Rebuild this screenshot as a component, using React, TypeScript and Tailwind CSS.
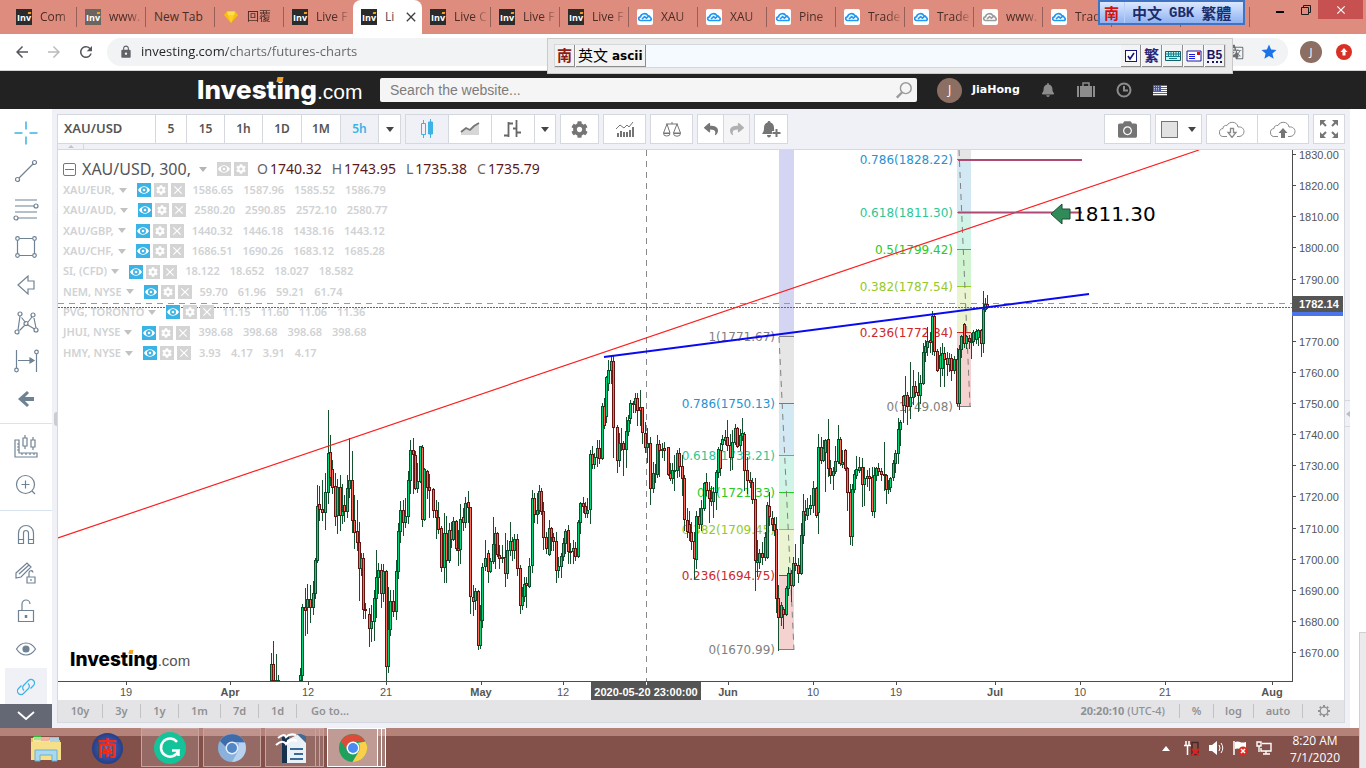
import type { ReactNode } from "react";
import { FaBell, FaCamera, FaCog, FaReply, FaShare } from "react-icons/fa";
import { MdArrowBack, MdArrowForward, MdClose, MdGTranslate, MdLock, MdRefresh, MdStar } from "react-icons/md";

type Candle = [number, number, number, number, number, number];

// x, high, body top, body bottom, low, 1 = up / 0 = down
const candles: Candle[] = [
  [271, 653, 664, 680, 680, 1], [273, 641, 664, 680, 680, 0], [276, 654, 680, 680, 680, 1], [278, 675, 680, 680, 680, 1],
  [300, 668, 675, 680, 680, 1], [302, 604, 607, 675, 680, 1], [305, 588, 607, 610, 635, 0], [307, 584, 599, 607, 633, 1],
  [310, 585, 599, 607, 622, 0], [313, 581, 593, 607, 614, 1], [315, 558, 560, 593, 598, 1], [317, 485, 506, 560, 562, 1],
  [319, 486, 504, 509, 520, 0], [322, 480, 509, 512, 520, 0], [325, 473, 492, 512, 529, 1], [328, 410, 453, 492, 503, 1],
  [330, 435, 452, 477, 485, 0], [332, 460, 469, 487, 493, 0], [335, 473, 486, 516, 525, 0], [337, 479, 487, 515, 533, 1],
  [340, 475, 487, 515, 530, 0], [342, 484, 511, 515, 523, 1], [344, 495, 505, 511, 521, 0], [347, 475, 488, 511, 517, 1],
  [349, 438, 480, 488, 497, 1], [352, 451, 480, 520, 532, 0], [354, 495, 520, 532, 548, 0], [357, 500, 531, 542, 550, 0],
  [359, 522, 542, 568, 600, 0], [361, 553, 558, 568, 575, 1], [363, 553, 558, 609, 618, 0], [365, 603, 609, 610, 618, 0],
  [369, 608, 614, 628, 646, 0], [371, 605, 621, 628, 641, 1], [374, 590, 598, 621, 640, 1], [376, 550, 577, 598, 617, 1],
  [378, 563, 570, 577, 593, 1], [381, 564, 570, 593, 607, 0], [383, 564, 571, 593, 601, 1], [386, 570, 571, 666, 680, 0],
  [388, 587, 629, 666, 672, 1], [390, 590, 601, 629, 635, 1], [393, 590, 601, 611, 616, 0], [396, 560, 571, 611, 619, 1],
  [398, 523, 531, 571, 578, 1], [400, 501, 510, 531, 542, 1], [403, 500, 510, 522, 535, 0], [405, 498, 516, 522, 527, 1],
  [408, 471, 480, 516, 523, 1], [410, 440, 450, 480, 493, 1], [413, 438, 450, 454, 493, 0], [415, 451, 455, 488, 489, 0],
  [417, 463, 481, 488, 492, 1], [420, 446, 446, 481, 482, 1], [422, 445, 447, 519, 526, 0], [424, 468, 469, 519, 520, 1],
  [427, 470, 471, 487, 498, 0], [429, 474, 487, 490, 517, 0], [433, 488, 489, 510, 517, 0], [436, 500, 510, 517, 538, 0],
  [438, 502, 517, 529, 533, 0], [441, 526, 528, 567, 571, 0], [444, 513, 533, 567, 582, 1], [446, 516, 533, 560, 582, 0],
  [449, 523, 530, 560, 562, 1], [451, 522, 530, 539, 547, 0], [453, 517, 521, 539, 540, 1], [456, 520, 521, 548, 550, 0],
  [458, 530, 548, 550, 565, 0], [460, 504, 519, 549, 563, 1], [463, 508, 517, 522, 530, 0], [465, 497, 503, 522, 527, 1],
  [468, 491, 502, 507, 522, 0], [470, 507, 507, 596, 613, 0], [473, 585, 597, 601, 615, 0], [475, 588, 591, 600, 609, 1],
  [478, 590, 591, 645, 649, 0], [480, 605, 620, 645, 648, 1], [482, 563, 567, 620, 627, 1], [485, 540, 558, 566, 570, 1],
  [488, 550, 553, 571, 582, 0], [490, 558, 561, 571, 572, 1], [493, 517, 544, 561, 563, 1], [495, 527, 533, 544, 568, 1],
  [497, 532, 533, 554, 556, 0], [499, 545, 555, 558, 568, 0], [502, 545, 557, 558, 562, 1], [505, 533, 557, 573, 586, 0],
  [507, 540, 550, 573, 578, 1], [510, 522, 541, 550, 555, 1], [512, 537, 541, 550, 560, 0], [514, 534, 539, 550, 558, 1],
  [517, 534, 539, 568, 575, 0], [520, 565, 568, 605, 613, 0], [522, 587, 596, 605, 609, 1], [524, 577, 584, 596, 601, 1],
  [526, 577, 583, 585, 607, 0], [529, 558, 566, 586, 587, 1], [532, 490, 498, 565, 572, 1], [534, 493, 498, 514, 522, 0],
  [537, 493, 510, 514, 523, 1], [539, 485, 491, 510, 513, 1], [541, 488, 491, 511, 514, 0], [543, 502, 511, 537, 549, 0],
  [546, 532, 537, 548, 553, 0], [549, 520, 528, 554, 555, 1], [551, 527, 528, 537, 550, 0], [553, 533, 537, 541, 550, 0],
  [556, 532, 541, 570, 582, 0], [558, 557, 566, 570, 577, 1], [561, 553, 556, 566, 577, 1], [563, 538, 543, 556, 560, 1],
  [565, 529, 531, 543, 553, 1], [568, 525, 530, 551, 563, 0], [570, 543, 551, 552, 563, 0], [573, 540, 548, 551, 563, 1],
  [575, 542, 548, 556, 560, 0], [578, 520, 522, 556, 557, 1], [580, 502, 503, 522, 533, 1], [583, 497, 503, 506, 512, 0],
  [585, 502, 506, 513, 517, 0], [587, 498, 510, 513, 517, 1], [590, 450, 454, 509, 523, 1], [592, 446, 454, 464, 468, 0],
  [594, 453, 457, 464, 468, 1], [597, 440, 448, 457, 466, 1], [599, 440, 448, 458, 463, 0], [602, 403, 406, 458, 459, 1],
  [604, 398, 406, 425, 428, 0], [606, 376, 377, 416, 422, 1], [608, 360, 370, 383, 390, 1], [611, 355, 361, 370, 383, 1],
  [613, 356, 361, 427, 457, 0], [617, 425, 427, 460, 472, 0], [619, 433, 443, 460, 466, 1], [621, 428, 443, 444, 450, 1],
  [623, 441, 443, 449, 475, 0], [626, 417, 431, 449, 467, 1], [628, 415, 420, 431, 435, 1], [630, 400, 403, 418, 423, 1],
  [633, 401, 403, 404, 412, 0], [635, 393, 398, 404, 412, 1], [637, 393, 398, 410, 425, 0], [640, 390, 407, 410, 425, 0],
  [642, 407, 407, 432, 443, 0], [645, 422, 433, 447, 452, 0], [647, 428, 443, 447, 462, 1], [650, 437, 443, 488, 504, 0],
  [653, 462, 473, 488, 492, 1], [655, 464, 473, 474, 482, 1], [657, 435, 444, 474, 477, 1], [659, 440, 444, 450, 476, 0],
  [662, 443, 449, 450, 457, 1], [664, 442, 448, 450, 460, 0], [668, 447, 447, 474, 475, 0], [670, 463, 473, 478, 480, 0],
  [672, 463, 470, 478, 483, 1], [674, 455, 470, 471, 490, 1], [677, 450, 453, 470, 477, 1], [679, 448, 453, 466, 476, 0],
  [682, 455, 466, 478, 495, 0], [684, 475, 478, 519, 530, 0], [687, 508, 520, 531, 537, 0], [689, 511, 524, 532, 540, 0],
  [691, 522, 532, 541, 549, 0], [694, 532, 541, 558, 578, 0], [696, 511, 516, 559, 568, 1], [699, 508, 516, 524, 528, 0],
  [701, 500, 508, 524, 530, 1], [704, 482, 483, 508, 510, 1], [706, 473, 482, 490, 495, 0], [709, 482, 490, 498, 522, 0],
  [711, 486, 498, 501, 505, 0], [713, 487, 492, 501, 517, 1], [716, 470, 472, 492, 509, 1], [718, 447, 449, 472, 477, 1],
  [720, 443, 450, 468, 475, 0], [722, 435, 439, 444, 450, 1], [725, 430, 437, 440, 444, 1], [727, 420, 437, 445, 450, 0],
  [730, 434, 445, 457, 470, 0], [732, 430, 442, 457, 469, 1], [735, 424, 428, 442, 444, 1], [737, 427, 428, 446, 447, 0],
  [740, 429, 435, 445, 450, 1], [742, 418, 433, 436, 440, 1], [744, 432, 434, 470, 490, 0], [747, 457, 470, 480, 493, 0],
  [750, 472, 480, 482, 487, 0], [752, 478, 482, 499, 503, 0], [755, 478, 499, 560, 590, 0], [757, 540, 560, 562, 576, 1],
  [759, 549, 553, 562, 568, 1], [762, 542, 553, 557, 564, 0], [765, 532, 537, 557, 560, 1], [767, 502, 505, 557, 558, 1],
  [769, 492, 506, 516, 525, 0], [772, 511, 518, 524, 530, 0], [774, 517, 524, 530, 535, 0], [776, 517, 529, 598, 612, 0],
  [778, 585, 598, 617, 650, 0], [781, 602, 605, 617, 625, 1], [783, 607, 609, 614, 628, 0], [786, 586, 588, 614, 615, 1],
  [788, 567, 573, 588, 595, 1], [791, 570, 573, 585, 601, 0], [793, 557, 563, 585, 586, 1], [795, 544, 563, 565, 570, 0],
  [798, 558, 565, 573, 582, 0], [801, 523, 535, 573, 574, 1], [803, 494, 511, 535, 543, 1], [805, 500, 511, 514, 520, 0],
  [807, 498, 508, 515, 519, 1], [810, 495, 505, 508, 514, 1], [813, 481, 488, 505, 512, 1], [816, 487, 488, 515, 517, 0],
  [818, 434, 447, 512, 533, 1], [821, 437, 447, 460, 463, 0], [823, 440, 448, 460, 461, 1], [825, 439, 440, 452, 491, 1],
  [828, 419, 439, 468, 476, 0], [830, 460, 468, 475, 483, 0], [833, 467, 471, 475, 489, 1], [835, 446, 461, 471, 473, 1],
  [838, 425, 439, 461, 463, 1], [840, 437, 439, 463, 465, 0], [842, 450, 462, 464, 467, 1], [845, 449, 450, 468, 470, 0],
  [847, 467, 468, 492, 510, 0], [850, 484, 492, 536, 544, 0], [852, 484, 489, 536, 545, 1], [854, 470, 474, 489, 492, 1],
  [856, 456, 469, 475, 478, 1], [859, 457, 467, 470, 472, 1], [862, 458, 467, 484, 506, 0], [864, 467, 478, 484, 505, 1],
  [867, 470, 476, 478, 486, 1], [869, 468, 476, 478, 490, 0], [872, 467, 477, 511, 515, 0], [874, 467, 475, 511, 517, 1],
  [876, 467, 468, 475, 480, 1], [878, 463, 468, 471, 475, 0], [881, 468, 471, 474, 480, 0], [884, 442, 474, 475, 490, 0],
  [886, 474, 475, 489, 503, 0], [888, 480, 488, 489, 493, 1], [890, 477, 478, 487, 491, 1], [893, 460, 463, 477, 480, 1],
  [895, 450, 453, 463, 472, 1], [898, 418, 429, 453, 463, 1], [900, 420, 422, 429, 445, 1], [903, 395, 396, 405, 422, 0],
  [905, 376, 395, 405, 412, 1], [907, 392, 395, 406, 424, 0], [910, 362, 397, 406, 418, 1], [913, 370, 386, 397, 404, 1],
  [915, 381, 386, 392, 396, 0], [918, 372, 392, 395, 411, 0], [920, 375, 383, 395, 403, 1], [923, 343, 352, 383, 384, 1],
  [925, 340, 346, 352, 361, 1], [927, 327, 341, 347, 355, 1], [930, 332, 340, 342, 352, 0], [932, 311, 316, 341, 354, 1],
  [934, 313, 316, 351, 355, 0], [937, 349, 351, 370, 371, 0], [940, 347, 355, 368, 386, 1], [942, 343, 353, 368, 375, 1],
  [944, 347, 353, 359, 386, 0], [947, 352, 358, 364, 375, 0], [949, 353, 358, 364, 371, 1], [951, 354, 358, 370, 380, 0],
  [954, 356, 359, 370, 373, 1], [957, 348, 359, 403, 405, 0], [959, 345, 349, 403, 409, 1], [961, 335, 336, 349, 357, 1],
  [964, 323, 324, 343, 347, 0], [966, 335, 336, 343, 348, 1], [969, 335, 338, 341, 348, 0], [971, 333, 341, 342, 358, 1],
  [973, 330, 332, 341, 345, 1], [976, 329, 331, 339, 343, 1], [978, 329, 330, 337, 345, 1], [981, 329, 330, 343, 356, 0],
  [983, 291, 309, 343, 352, 1], [985, 298, 304, 309, 311, 1], [987, 295, 304, 307, 308, 0],
];

// line colour and band colour of each retracement level
const levelColors: Record<string, [string, string]> = {
  "1": ["#808080", "#e6e6e6"],
  "0.786": ["#2692d2", "#d2e9f4"],
  "0.618": ["#2bc795", "#d1f4e8"],
  "0.5": ["#28c928", "#d0f4d0"],
  "0.382": ["#94c929", "#eaf4d1"],
  "0.236": ["#cc2828", "#f4d2d0"],
  "0": ["#808080", "#f4d2d0"],
};

const fibs = [
  {
    x: 779,
    width: 15,
    levels: [
      ["1", "1771.67", 336], ["0.786", "1750.13", 403], ["0.618", "1733.21", 455], ["0.5", "1721.33", 492],
      ["0.382", "1709.45", 529], ["0.236", "1694.75", 575], ["0", "1670.99", 649],
    ] as [string, string, number][],
  },
  {
    x: 957,
    width: 14,
    levels: [
      ["1", "", 149], ["0.786", "1828.22", 159], ["0.618", "1811.30", 212], ["0.5", "1799.42", 249],
      ["0.382", "1787.54", 286], ["0.236", "1772.84", 332], ["0", "1749.08", 406],
    ] as [string, string, number][],
  },
];

const compareRows = [
  ["XAU/EUR,", "1586.65", "1587.96", "1585.52", "1586.79"],
  ["XAU/AUD,", "2580.20", "2590.85", "2572.10", "2580.77"],
  ["XAU/GBP,", "1440.32", "1446.18", "1438.16", "1443.12"],
  ["XAU/CHF,", "1686.51", "1690.26", "1683.12", "1685.28"],
  ["SI, (CFD)", "18.122", "18.652", "18.027", "18.582"],
  ["NEM, NYSE", "59.70", "61.96", "59.21", "61.74"],
  ["PVG, TORONTO", "11.15", "11.60", "11.06", "11.36"],
  ["JHUI, NYSE", "398.68", "398.68", "398.68", "398.68"],
  ["HMY, NYSE", "3.93", "4.17", "3.91", "4.17"],
];

const timeLabels: [number, string][] = [
  [126, "19"], [230, "Apr"], [308, "12"], [386, "21"], [481, "May"], [563, "12"], [728, "Jun"],
  [813, "10"], [896, "19"], [995, "Jul"], [1080, "10"], [1165, "21"], [1272, "Aug"],
];

const tabs: [string, string][] = [
  ["inv", "Com"], ["inv-dim", "www."], ["", "New Tab"], ["gem", "回覆"], ["inv", "Live F"],
  ["active", "Li"], ["inv", "Live C"], ["inv", "Live F"], ["inv", "Live F"], ["cloud", "XAU"],
  ["cloud", "XAU"], ["cloud", "Pine"], ["cloud", "Trade"], ["cloud", "Trade"], ["cloud-dim", "www."],
  ["cloud", "Trad"], ["", ""], ["", ""],
];

/* ---------- browser chrome ---------- */

const InvIcon = ({ dim = false }: { dim?: boolean }) => (
  <span
    className={`relative flex size-4 shrink-0 items-center justify-center overflow-hidden font-['Open_Sans'] text-[9px] leading-none font-bold text-white ${dim ? "bg-[#6b6560]" : "bg-[#2b2b2b]"}`}
  >
    Inv
    <i className="absolute top-[3px] right-px h-[2px] w-[3px] -skew-x-12 bg-[#f7a021]" />
  </span>
);

const CloudIcon = ({ color }: { color: string }) => (
  <svg viewBox="0 0 16 16" className="size-4 shrink-0">
    <rect width="16" height="16" rx="2" fill="#fff" />
    <path d="M3.5 11.5a1.8 1.8 0 0 1 0-3.6 4 4 0 0 1 7.4-1.2M5 10l2.6-2.4 1.8 1.5 2.5-2.2 2.1 2.4a1.4 1.4 0 0 1-1.2 2.2H3.5" fill="none" stroke={color} strokeWidth="1.7" strokeLinejoin="round" />
  </svg>
);

const TabIcon = ({ kind }: { kind: string }) => {
  if (kind === "inv" || kind === "active") return <InvIcon />;
  if (kind === "inv-dim") return <InvIcon dim />;
  if (kind === "cloud") return <CloudIcon color="#2196f3" />;
  if (kind === "cloud-dim") return <CloudIcon color="#9b9b9b" />;
  if (kind === "gem")
    return (
      <svg viewBox="0 0 16 16" className="size-4 shrink-0">
        <path d="M4 2.5h8L15 6 8 14 1 6z" fill="#fdbd0b" />
        <path d="M4 2.5h8L11 6H5z" fill="#fde14a" />
        <path d="M5 6h6l-3 8z" fill="#fdd028" />
      </svg>
    );
  return null;
};

const TabStrip = () => (
  <div className="flex h-[34px] shrink-0 items-stretch overflow-hidden bg-[#de8c7d] pl-2 font-['Open_Sans',_'Noto_Sans_CJK_TC',_sans-serif]">
    {tabs.map(([kind, title], i) =>
      kind === "active" ? (
        <div key={i} className="flex w-[69px] shrink-0 items-center gap-2 rounded-t-lg bg-white pl-2">
          <TabIcon kind={kind} />
          <span className="w-[10px] text-xs text-[#45494d]">{title}</span>
          <button aria-label="Close tab">
            <MdClose className="size-4 text-[#3c4043]" />
          </button>
        </div>
      ) : (
        <button
          key={i}
          className={`relative flex w-[69px] shrink-0 items-center gap-2 pl-2 text-xs text-[#4a2c27] ${i === 4 ? "" : "after:absolute after:right-0 after:h-5 after:w-px after:bg-[#96605a]"}`}
        >
          <TabIcon kind={kind} />
          {kind === "" ? (
            <span className="whitespace-nowrap">{title}</span>
          ) : (
            <span className="flex-1 text-left whitespace-nowrap [mask-image:linear-gradient(90deg,#000_50%,transparent_95%)]">{title}</span>
          )}
        </button>
      ),
    )}
  </div>
);

const WindowControls = () => (
  <div className="absolute top-0 right-[3px] flex h-5">
    <button aria-label="Minimize" className="flex w-7 items-center justify-center">
      <i className="mt-1 h-[2px] w-2 bg-black" />
    </button>
    <button aria-label="Restore" className="flex w-6 items-center justify-center">
      <svg viewBox="0 0 12 12" className="size-3" fill="none" stroke="#1c1c1c">
        <path d="M1.5 3.5h7v7h-7zM3.5 3.5v-2h7v7h-2" />
      </svg>
    </button>
    <button aria-label="Close" className="flex h-[19px] w-[45px] items-center justify-center bg-[#c75050] text-white">
      <MdClose className="size-3.5" />
    </button>
  </div>
);

const AddressBar = () => (
  <div className="flex h-[37px] shrink-0 items-center border-b border-[#d5d5d5] bg-white pr-[14px] pl-[13px]">
    <button aria-label="Back"><MdArrowBack className="size-[18px] text-[#54585c]" /></button>
    <button aria-label="Forward" className="ml-3.5"><MdArrowForward className="size-[18px] text-[#b9bbbd]" /></button>
    <button aria-label="Reload" className="ml-3.5"><MdRefresh className="size-[18px] text-[#54585c]" /></button>
    <div className="ml-3 flex h-7 flex-1 items-center rounded-full bg-[#f1f3f4] pr-2.5 pl-3">
      <MdLock className="size-3.5 text-[#5f6368]" />
      <input
        aria-label="Address"
        defaultValue="investing.com/charts/futures-charts"
        className="ml-2 flex-1 bg-[linear-gradient(90deg,#202124_86px,#5f6368_86px)] bg-clip-text font-['Open_Sans',_sans-serif] text-[13px] text-transparent outline-none"
      />
      <MdGTranslate className="size-4 text-[#6b6f73]" />
      <MdStar className="ml-4 size-[18px] text-[#1a73e8]" />
    </div>
    <button className="ml-3 flex size-[22px] items-center justify-center rounded-full bg-[#8d6e63] font-['Open_Sans'] text-[11px] text-white">J</button>
    <button aria-label="Update" className="ml-3.5 flex size-4 items-center justify-center rounded-full bg-[#d93025]">
      <svg viewBox="0 0 10 10" className="size-2.5" fill="#fff"><path d="M5 1 1.5 5h2v3.5h3V5h2z" /></svg>
    </button>
  </div>
);

const ImeBadge = () => (
  <div className="absolute top-0 right-[121px] flex h-[25px] w-[147px] items-center border-2 border-[#3f73c4] bg-linear-to-b from-[#dbe8ff] to-[#8fb2f2] font-['Noto_Sans_CJK_TC',_sans-serif] text-[15px] font-bold text-[#1c2c6b]">
    <span className="mx-1 w-4 leading-5 text-[#d3140c]">南</span>
    <span className="h-full border-l border-[#b9cff8]" />
    <span className="ml-[7px] flex items-center gap-[7px] leading-5 whitespace-nowrap">
      中文<span className="font-['Liberation_Mono'] text-sm">GBK</span><span>繁體</span>
    </span>
  </div>
);

const imeCell = "flex h-[22px] items-center justify-center border-r border-b border-[#8d8d8d] bg-[#f3f3f3]";

const ImeBar = () => (
  <div className="absolute top-[38px] right-[133px] flex h-9 w-[686px] items-center border border-[#c9c9c9] bg-[#ebebeb] px-1.5 font-['Noto_Sans_CJK_TC',_sans-serif]">
    <div className="flex h-6 flex-1 items-center border border-[#d3d8dd] bg-[#f4faff]">
      <span className={`${imeCell} w-5 text-[15px] font-bold text-[#8f1d17]`}>南</span>
      <span className={`${imeCell} ml-px px-0.5 text-[15px] whitespace-nowrap`}>
        英文<b className="ml-1 font-['DejaVu_Sans'] text-xs">ascii</b>
      </span>
      <div className="ml-auto flex gap-px">
        <label className={`${imeCell} relative w-5`}>
          <input type="checkbox" defaultChecked aria-label="Enabled" className="size-3 appearance-none border border-[#16167c] bg-white" />
          <svg viewBox="0 0 12 12" className="pointer-events-none absolute size-3" fill="none" stroke="#16167c" strokeWidth="1.6"><path d="m3 6 2 3 4-6" /></svg>
        </label>
        <button className={`${imeCell} w-5 text-[15px] font-bold text-[#2a2478]`}>繁</button>
        <button aria-label="Keyboard" className={`${imeCell} w-5`}>
          <svg viewBox="0 0 16 12" className="h-3 w-4">
            <path d="M.5 1.5h15v9H.5z" fill="#c9f1ec" stroke="#12606b" />
            <path d="M1 4h14M1 6.500h14M3.500 2v4.500M6 2v4.500M8.500 2v4.500M11 2v4.500M13.500 2v4.500M4 8.500h8" stroke="#12808b" />
          </svg>
        </button>
        <button aria-label="Notes" className={`${imeCell} w-5`}>
          <svg viewBox="0 0 16 12" className="h-3 w-4">
            <path d="M1 1h14v10H1z" fill="#fff" stroke="#1a1a9c" />
            <path d="M3 4.500h6M3 6.500h6M3 8.500h6" stroke="#1a1ae0" />
            <path d="M11 2h3v3h-3z" fill="#e01010" />
          </svg>
        </button>
        <button className={`${imeCell} w-5 text-xs leading-none font-bold text-[#1b1464]`}>
          <span className="border-b-2 border-dotted border-[#1b1464] font-['Liberation_Sans']">B5</span>
        </button>
      </div>
    </div>
  </div>
);

/* ---------- site header ---------- */

const Logo = ({ small = false }: { small?: boolean }) => (
  <span className={`flex items-baseline leading-none ${small ? "text-black" : "text-white"}`}>
    <span className={`relative font-['Inter'] font-extrabold ${small ? "text-[19px]" : "text-[26px]"}`}>
      Invest
      <span className="relative">
        i
        <i className={`absolute left-px -skew-x-12 bg-[#f7a021] ${small ? "top-[2px] h-[4px] w-[4px]" : "top-[3px] h-[5px] w-[6px]"}`} />
      </span>
      ng
    </span>
    <span className={`font-['Liberation_Sans'] ${small ? "text-[15px] text-[#555]" : "text-[21px]"}`}>.com</span>
  </span>
);

const SiteHeader = () => (
  <header className="flex h-[38px] shrink-0 items-center bg-[#222] pr-[199px] pl-[197px]">
    <a href="#" className="w-[183px] shrink-0"><Logo /></a>
    <form className="flex h-6 flex-1 items-center rounded-xs bg-[#f5f5f5] pr-1 pl-2.5">
      <input
        aria-label="Search"
        placeholder="Search the website..."
        className="flex-1 font-['Liberation_Sans'] text-sm outline-none placeholder:text-[#7c7c7c]"
      />
      <svg viewBox="0 0 20 20" className="size-[18px]" fill="none" stroke="#9a9a9a" strokeWidth="1.6">
        <circle cx="12" cy="8" r="6" /><path d="m8 12.500-6 6" strokeWidth="2.600" />
      </svg>
    </form>
    <span className="ml-5 flex size-[25px] items-center justify-center rounded-full bg-[#8d6e63] font-['Open_Sans'] text-xs text-white">J</span>
    <a href="#" className="ml-2.5 w-[66px] font-['DejaVu_Sans'] text-[11px] font-bold text-white">JiaHong</a>
    <FaBell className="ml-[3px] size-3.5 text-[#8c8c8c]" />
    <svg viewBox="0 0 18 16" className="ml-[22px] h-4 w-[18px]" fill="#8c8c8c">
      <path d="M0 4h2v11H0zM3 4h12v11H3zM16 4h2v11h-2z" /><path d="M6 4V1h6v3" fill="none" stroke="#8c8c8c" strokeWidth="1.500" />
    </svg>
    <svg viewBox="0 0 16 16" className="ml-[21px] size-4" fill="none" stroke="#8c8c8c" strokeWidth="2">
      <circle cx="8" cy="8" r="6.500" /><path d="M8 4v4.500h4" />
    </svg>
    <svg viewBox="0 0 14 11" className="ml-[21px] h-[11px] w-3.5">
      <path fill="#fff" d="M0 0h14v11H0z" />
      <path stroke="#d0363e" d="M0 .5h14M0 2.500h14M0 4.500h14M0 6.500h14M0 8.500h14M0 10.500h14" />
      <path fill="#4a57a5" d="M0 0h8v6H0z" /><path stroke="#b9c0e8" strokeDasharray="1 1" d="M1 1.500h6M1 3.500h6M1 5h6" />
    </svg>
  </header>
);

/* ---------- drawing tools ---------- */

const Tool = ({ label, active = false, children }: { label: string; active?: boolean; children: ReactNode }) => (
  <button
    aria-label={label}
    className={`mx-[5px] flex h-[38px] shrink-0 items-center justify-center ${active ? "bg-[#f0f1f6] text-[#3bb3e4]" : "text-[#6f8294]"}`}
  >
    <svg viewBox="0 0 26 26" className="size-[26px]" fill="none" stroke="currentColor" strokeWidth="1.200">{children}</svg>
  </button>
);

const DrawingTools = () => (
  <aside className="flex w-[52px] shrink-0 flex-col bg-white">
    <div className="flex min-h-0 flex-1 flex-col overflow-hidden">
      <div className="flex flex-col border-b border-[#d9e4f0] py-[5px]">
        <Tool label="Crosshair"><path stroke="#3bb3e4" strokeWidth="1.500" d="M13 1.500v8M13 16.500v8M1.500 13h8M16.500 13h8" /></Tool>
        <Tool label="Trend line"><circle cx="4.500" cy="21.500" r="2" /><circle cx="21.500" cy="4.500" r="2" /><path d="M6 20 20 6" /></Tool>
        <Tool label="Lines"><path d="M2 4h22M2 10h19M2 16h22M5 22h19" /><circle cx="23" cy="10" r="2" /><circle cx="3" cy="22" r="2" /></Tool>
        <Tool label="Shapes">
          <path d="M6.500 4.500h13M6.500 21.500h13M4.500 6.500v13M21.500 6.500v13" />
          <circle cx="4.500" cy="4.500" r="1.800" /><circle cx="21.500" cy="4.500" r="1.800" /><circle cx="4.500" cy="21.500" r="1.800" /><circle cx="21.500" cy="21.500" r="1.800" />
        </Tool>
        <Tool label="Arrow"><path d="M5 13 15 4v5h6v8h-6v5z" /></Tool>
        <Tool label="Patterns">
          <path d="M5 20 7 6M8.500 7.500l4 5M15 12l4-5M21 8l2 10M6.500 20.500l5-5M14 14.500l7.500 4.500" />
          <circle cx="7" cy="4" r="2" /><circle cx="20" cy="5" r="2" /><circle cx="13" cy="13.500" r="2" /><circle cx="4" cy="22" r="2" /><circle cx="23" cy="20" r="2" />
        </Tool>
        <Tool label="Range">
          <path d="M3.500 2v18M23.500 6v18M5 12.500h15" /><path d="m17 10 4 2.500-4 2.500z" fill="currentColor" />
          <circle cx="3.500" cy="22" r="1.800" /><circle cx="23.500" cy="4" r="1.800" />
        </Tool>
        <Tool label="Back"><path fill="currentColor" stroke="none" d="m5 13 9-8 2 2-4 4h9v4h-9l4 4-2 2z" /></Tool>
      </div>
      <div className="flex flex-col border-b border-[#d9e4f0] pt-1 pb-1.5">
        <Tool label="Measure">
          <path d="M2 6h4v13h18v4H2zM4 10h2M4 13h2M4 16h2M9 19v2M13 19v2M17 19v2M21 19v2M12 1v3M12 12v3M20 3v3M20 13v3" />
          <path d="M10 4h4v8h-4zM18 6h4v7h-4z" />
        </Tool>
        <Tool label="Zoom in"><circle cx="12.500" cy="12.500" r="9" /><path d="M12.500 8.500v8M8.500 12.500h8M19 19l3 3" /></Tool>
      </div>
      <div className="flex flex-col pt-[5px]">
        <Tool label="Magnet"><path d="M5.500 21.500V11a7.500 7.500 0 0 1 15 0v10.500h-5V11a2.500 2.500 0 0 0-5 0v10.500zM5.500 17.500h5M15.500 17.500h5" /></Tool>
        <Tool label="Lock drawing">
          <path d="m3 13 11-10 4 4L8 17l-5 1zM6 14l10-9M14 18v5h8v-6h-8zM16 17v-4a2 2 0 0 1 4-.5M18 19v2" />
        </Tool>
        <Tool label="Lock all"><path d="M5.500 12.500h15v11h-15zM9 12.500V6a4 4 0 0 1 8 0" /><path strokeWidth="2.500" d="M13 17v3" /></Tool>
        <Tool label="Hide all"><path d="M3.500 13c5-8 14-8 19 0-5 8-14 8-19 0z" /><circle cx="13" cy="13" r="3" fill="currentColor" /></Tool>
        <Tool label="Link" active>
          <path d="M11 16.500a3.500 3.500 0 0 1-.5-5l5-5a3.500 3.500 0 0 1 5 5l-3 3M15 9.500a3.500 3.500 0 0 1 .5 5l-5 5a3.500 3.500 0 0 1-5-5l3-3" />
        </Tool>
      </div>
    </div>
    <button aria-label="More tools" className="flex h-6 shrink-0 items-center justify-center bg-[#646875]">
      <svg viewBox="0 0 18 10" className="h-2.5 w-[18px]" fill="none" stroke="#fff" strokeWidth="1.800"><path d="m1 1 8 7 8-7" /></svg>
    </button>
  </aside>
);

/* ---------- chart toolbar ---------- */

const cell = "flex h-full items-center justify-center border-r border-[#d5d8de] last:border-r-0";

const Group = ({ children }: { children: ReactNode }) => (
  <div className="flex h-[30px] shrink-0 border border-[#d5d8de] bg-white">{children}</div>
);

const Caret = ({ className = "" }: { className?: string }) => (
  <svg viewBox="0 0 8 5" className={`h-[5px] w-2 ${className}`} fill="currentColor"><path d="M0 0h8L4 5z" /></svg>
);

const ChartToolbar = () => (
  <div className="relative flex h-10 shrink-0 items-start gap-1 pt-[5px] font-['Noto_Sans',_sans-serif] text-xs font-semibold text-[#555]">
    <Group>
      <button className={`${cell} w-[98px] justify-start! pl-1.5 text-[13px]`}>XAU/USD</button>
      <button className={`${cell} w-[31px]`}>5</button>
      <button className={`${cell} w-[38px]`}>15</button>
      <button className={`${cell} w-[38px]`}>1h</button>
      <button className={`${cell} w-[39px]`}>1D</button>
      <button className={`${cell} w-[39px]`}>1M</button>
      <button className={`${cell} w-[38px] bg-[#f0f1f6] text-[#3bb3e4]`}>5h</button>
      <button aria-label="Intervals" className={`${cell} w-[21px]`}><Caret className="text-[#444]" /></button>
    </Group>
    <Group>
      <button aria-label="Candles" className={`${cell} w-[43px] bg-[#f0f1f6]`}>
        <svg viewBox="0 0 14 20" className="h-5 w-3.5" stroke="#3bb3e4">
          <path d="M3.500 1v3M3.500 16v3M10.500 0v3M10.500 15v4" /><path d="M1.500 4.500h4v11h-4z" fill="none" /><path d="M8.500 3h4v12h-4z" fill="#3bb3e4" />
        </svg>
      </button>
      <button aria-label="Area" className={`${cell} w-[43px]`}>
        <svg viewBox="0 0 20 14" className="h-3.5 w-5"><path d="M1 13V9l5-3 4 2 4-4 5-3v12z" fill="#d6d6d6" /><path d="m1 10 5-4 4 2 4-4 5-3" fill="none" stroke="#757575" strokeWidth="1.800" /></svg>
      </button>
      <button aria-label="Bars" className={`${cell} w-[43px]`}>
        <svg viewBox="0 0 18 18" className="size-[18px]" fill="none" stroke="#666" strokeWidth="1.800"><path d="M4.500 2v15M0 15.500h4.500M4.500 3.500H9M12.500 0v17M9 8.500h3.500M12.500 12.500H17" /></svg>
      </button>
      <button aria-label="Chart types" className={`${cell} w-5`}><Caret className="text-[#444]" /></button>
    </Group>
    <Group><button aria-label="Settings" className={`${cell} w-[37px]`}><FaCog className="size-[17px] text-[#757575]" /></button></Group>
    <Group>
      <button aria-label="Indicators" className={`${cell} w-[41px]`}>
        <svg viewBox="0 0 18 16" className="h-4 w-[18px]" fill="none" stroke="#757575">
          <path strokeWidth="2" d="M2 16v-4M5 16v-6M8 16v-5M11 16v-5M14 16V9M17 16V6" /><path d="m0 8 4-4 4 3 3-3 2 2 4-5" />
        </svg>
      </button>
    </Group>
    <Group>
      <button aria-label="Compare" className={`${cell} w-[41px]`}>
        <svg viewBox="0 0 18 15" className="h-[15px] w-[18px]" fill="none" stroke="#757575">
          <path d="M3 2h12M9 0v2M4 2 .5 11h6.500zM14 2l-3.500 9h7z" /><path d="M.5 11.500a3.200 2.500 0 0 0 6.500 0zM10.500 11.500a3.200 2.500 0 0 0 7 0z" />
        </svg>
      </button>
    </Group>
    <Group>
      <button aria-label="Undo" className={`${cell} w-[26px]`}><FaReply className="size-3.5 text-[#757575]" /></button>
      <button aria-label="Redo" className={`${cell} w-[25px] bg-[#f5f5f8]`}><FaShare className="size-3.5 text-[#b0b0b0]" /></button>
    </Group>
    <Group>
      <button aria-label="Add alert" className={`${cell} w-8`}>
        <svg viewBox="0 0 19 17" className="h-[17px] w-[19px]" fill="#757575">
          <path d="M7 0c1 0 1.500.7 1.500 1.500C11 2.200 12 4 12 7c0 1.500.3 3 1 4v2H0c1.500-2 2-3.500 2-6 0-3 1-4.800 3.500-5.500C5.500.7 6 0 7 0zM5 14h4c0 1.500-.8 2.500-2 2.500S5 15.500 5 14z" />
          <path d="M14.500 7.500v9M10 12h9" stroke="#fff" strokeWidth="4" /><path d="M14.500 8v8M10.500 12h8" stroke="#757575" strokeWidth="2" />
        </svg>
      </button>
    </Group>
    <span className="flex-1" />
    <Group><button aria-label="Snapshot" className={`${cell} w-[45px]`}><FaCamera className="size-[19px] text-[#757575]" /></button></Group>
    <Group>
      <button aria-label="Background" className={`${cell} w-[45px] gap-2.5`}><i className="size-[17px] border border-[#757575] bg-[#e2e2e2]" /><Caret className="text-[#444]" /></button>
    </Group>
    <Group>
      <button aria-label="Load" className={`${cell} w-[51px]`}>
        <svg viewBox="0 0 26 17" className="h-[17px] w-[26px]" fill="none" stroke="#8a8a8a">
          <path d="M8 15.500H5a4 4 0 0 1-1-8C4 5 6 4 8 4.500 10 0 18 0 19 6c4-.5 6 2 6 4.500S23 15.500 20 15.500h-2" /><path d="M11.500 7.500h3v4H17l-4 5-4-5h2.500z" strokeWidth="1.300" />
        </svg>
      </button>
      <button aria-label="Save" className={`${cell} w-[50px]`}>
        <svg viewBox="0 0 26 17" className="h-[17px] w-[26px]" fill="none" stroke="#8a8a8a">
          <path d="M8 15.500H5a4 4 0 0 1-1-8C4 5 6 4 8 4.500 10 0 18 0 19 6c4-.5 6 2 6 4.500S23 15.500 20 15.500h-2" /><path d="M11 17v-5H8.500L13 7l4.500 5H15v5z" fill="#757575" stroke="none" />
        </svg>
      </button>
    </Group>
    <Group>
      <button aria-label="Fullscreen" className={`${cell} w-[30px]`}>
        <svg viewBox="0 0 18 18" className="size-[18px]" fill="#757575" stroke="#757575" strokeWidth="2">
          <path d="m2 2 4 4M16 2l-4 4M2 16l4-4M16 16l-4-4" /><path stroke="none" d="M0 0h6L0 6zM18 0v6l-6-6zM0 18v-6l6 6zM18 18h-6l6-6z" />
        </svg>
      </button>
    </Group>
    <span className="absolute bottom-0 left-0 flex h-[5px] w-[27px] items-center justify-center border-r border-l border-[#d5d8de]">
      <svg viewBox="0 0 6 3" className="h-[3px] w-1.5" fill="#c0c4cc"><path d="m3 0 3 3H0z" /></svg>
    </span>
  </div>
);

/* ---------- chart ---------- */

const Plot = () => (
  <svg viewBox="58 150 1234 531" preserveAspectRatio="xMinYMin slice" className="block h-full w-full" fontFamily="DejaVu Sans">
    <rect x={779} y={150} width={15} height={186} fill="#d4d5f3" />
    {fibs.map((fib) => (
      <g key={fib.x}>
        {fib.levels.map(([ratio, price, y], i) => {
          const next = fib.levels[i + 1];
          const [line, band] = levelColors[ratio];
          return (
            <g key={ratio}>
              {next && <rect x={fib.x} y={y} width={fib.width} height={next[2] - y} fill={band} />}
              <path d={`M${fib.x} ${y + 0.5}h${fib.width}`} stroke={line} />
              {price && (
                <text x={fib.x - 4} y={y + 5} fill={line} fontSize={12} textAnchor="end">
                  {`${ratio}(${price})`}
                </text>
              )}
            </g>
          );
        })}
      </g>
    ))}
    <path d="M779 337 794 650M959 150 970 406" stroke="#808080" strokeDasharray="6 5" fill="none" />
    <path d="M646.5 150V681" stroke="#8a8a8a" strokeDasharray="6 5" />
    <path d="M58 303.500H1292" stroke="#9a9a9a" strokeDasharray="6 5" />
    <path d="M58 307.500H1292" stroke="#3a66d8" strokeDasharray="2 1" />
    <g shapeRendering="crispEdges">
      {candles.map(([x, high, top, bottom, low, up]) => (
        <g key={x}>
          <rect x={x} y={high} width={1} height={low - high + 1} fill="#17502f" />
          <rect x={x - 1} y={top} width={3} height={bottom - top + 1} fill={up ? "#0a4f2c" : "#661310"} />
          {bottom - top > 1 && <rect x={x} y={top + 1} width={1} height={bottom - top - 1} fill={up ? "#00d67c" : "#ff6a5c"} />}
        </g>
      ))}
    </g>
    <path d="M58 538 1199 150" stroke="#fb2020" strokeWidth="1.200" />
    <path d="M604 357 1089 294" stroke="#0a0af0" strokeWidth="2" />
    <path d="M958 160h124M958 212.500h124" stroke="#ad4a74" strokeWidth="2" />
    <path d="m1051 214 11-10v5h8v10h-8v5z" fill="#318b58" stroke="#1c4f33" />
    <text x="1073" y="221" fontSize="20">1811.30</text>
  </svg>
);

const PriceAxis = () => (
  <svg viewBox="0 150 52 531" className="block h-full w-[52px] shrink-0" preserveAspectRatio="xMinYMin slice" fontFamily="Liberation Sans" fontSize="11">
    <path d="M.5 150v531" stroke="#4d4d4d" />
    {Array.from({ length: 17 }, (_, i) => {
      const y = Math.round(154 + i * 31.13);
      const price = 1830 - i * 10;
      return (
        <g key={i}>
          <path d={`M1 ${y + 0.5}h3`} stroke="#4d4d4d" />
          {price !== 1780 && <text x="7" y={y + 5} fill="#555">{`${price}.00`}</text>}
        </g>
      );
    })}
    <path d="M0 312h51v4H0z" fill="#4a76ea" />
    <path d="M0 296h51v16H0z" fill="#555" />
    <text x="7" y="308" fill="#fff" fontWeight="bold">1782.14</text>
  </svg>
);

const TimeAxis = () => (
  <svg viewBox="58 681 1286 19" className="block h-[19px] w-full shrink-0" preserveAspectRatio="xMinYMin slice" fontFamily="Liberation Sans" fontSize="11" textAnchor="middle">
    <path d="M58 681.500h1235" stroke="#4d4d4d" />
    {timeLabels.map(([x, text]) => (
      <g key={x}>
        <path d={`M${x + 0.5} 682v3`} stroke="#4d4d4d" />
        <text x={x} y="696" fill="#555" fontWeight={/\d/.test(text) ? "normal" : "bold"}>{text}</text>
      </g>
    ))}
    <path d="M591 682h110v18H591z" fill="#555" />
    <path d="M646.500 682v3" stroke="#fff" />
    <text x="646" y="696" fill="#fff" fontWeight="bold">2020-05-20 23:00:00</text>
  </svg>
);

const EyeButton = ({ on = false }: { on?: boolean }) => (
  <button aria-label="Toggle visibility" className={`flex size-3.5 items-center justify-center ${on ? "bg-[#3bb3e4]" : "bg-[#d4d4d4]"}`}>
    <svg viewBox="0 0 12 10" className="h-2.5 w-3" fill="#fff">
      <path fillRule="evenodd" d="M0 5c3-5 9-5 12 0-3 5-9 5-12 0zm6-3a3 3 0 1 0 0 6 3 3 0 0 0 0-6z" /><circle cx="6" cy="5" r="1.300" />
    </svg>
  </button>
);

const CogButton = () => (
  <button aria-label="Format" className="flex size-3.5 items-center justify-center bg-[#d4d4d4] text-white"><FaCog className="size-2.5" /></button>
);

const Legend = () => (
  <div className="absolute top-[9px] left-[5px] font-['Noto_Sans',_sans-serif]">
    <div className="flex h-5 items-center text-base whitespace-nowrap text-[#555]">
      <button aria-label="Collapse" className="flex size-[13px] items-center justify-center rounded-xs border border-[#777]"><i className="h-px w-[9px] bg-[#777]" /></button>
      <span className="ml-1.5">XAU/USD, 300,</span>
      <Caret className="mr-2.5 ml-2 text-[#b5b5b5]" />
      <EyeButton />
      <span className="ml-[3px]"><CogButton /></span>
      <span className="ml-[9px] flex gap-2.5 text-sm text-[#5b1a1a]">
        {["O1740.32", "H1743.95", "L1735.38", "C1735.79"].map((v) => (
          <span key={v}><span className="mr-0.5 text-[#666]">{v[0]}</span>{v.slice(1)}</span>
        ))}
      </span>
    </div>
    <div className="mt-px flex h-[183px] flex-col justify-between text-[11px] font-semibold text-[#d0d2d4]">
      {compareRows.map(([name, ...values]) => (
        <div key={name} className="flex h-5 items-center whitespace-nowrap">
          {name}
          <Caret className="mr-2.5 ml-1 text-[#c2c2c2]" />
          <span className="flex gap-[3px]">
            <EyeButton on />
            <CogButton />
            <button aria-label="Remove" className="flex size-3.5 items-center justify-center bg-[#d4d4d4] text-white"><MdClose className="size-3.5" /></button>
          </span>
          <span className="ml-2 flex gap-2.5">{values.map((v, i) => <span key={i}>{v}</span>)}</span>
        </div>
      ))}
    </div>
  </div>
);

const BottomBar = () => (
  <div className="flex h-[22px] shrink-0 items-center bg-[#e4e4e7] font-['Noto_Sans',_sans-serif] text-[11px] font-semibold text-[#8f9194]">
    {["10y", "3y", "1y", "1m", "7d", "1d"].map((range, i) => (
      <button key={range} className={`h-3.5 border-r border-[#c2c2c6] leading-3.5 ${i === 0 ? "w-[45px]" : i === 3 ? "w-[42px]" : "w-[38px]"}`}>{range}</button>
    ))}
    <button className="ml-3.5">Go to...</button>
    <span className="flex-1" />
    <span className="mr-3.5 font-bold">20:20:10 <span className="font-medium">(UTC-4)</span></span>
    <button className="h-3.5 w-[34px] border-l border-[#c2c2c6] leading-3.5">%</button>
    <button className="h-3.5 w-10 border-l border-[#c2c2c6] leading-3.5">log</button>
    <button className="h-3.5 w-[49px] border-l border-[#c2c2c6] leading-3.5">auto</button>
    <button aria-label="Scale settings" className="flex h-3.5 w-[42px] items-center justify-center border-l border-[#c2c2c6]">
      <svg viewBox="0 0 14 14" className="size-3.5" fill="none" stroke="#8f9194">
        <circle cx="7" cy="7" r="3.800" strokeWidth="1.300" />
        <path strokeWidth="2" d="M7 1v2M7 11v2M1 7h2M11 7h2M2.800 2.800l1.200 1.200M10 10l1.200 1.200M2.800 11.200 4 10M10 4l1.200-1.200" />
      </svg>
    </button>
  </div>
);

const ChartPanel = () => (
  <section className="relative flex min-w-0 flex-1 flex-col bg-[#f0f1f6] px-[5px] pb-[5px]">
    <ChartToolbar />
    <div className="flex min-h-0 flex-1 flex-col border border-[#d5d8de] bg-white">
      <div className="relative flex min-h-0 flex-1">
        <div className="min-w-0 flex-1 overflow-hidden"><Plot /></div>
        <PriceAxis />
        <Legend />
        <div className="absolute bottom-3 left-3"><Logo small /></div>
      </div>
      <TimeAxis />
      <BottomBar />
    </div>
    <i className="absolute top-[303px] left-0.5 h-3.5 w-[3px] rounded-l-full bg-[#c9ccd2]" />
    <span className="absolute top-[291px] right-0 flex h-[27px] w-[5px] items-center justify-center border-y border-[#d5d8de]">
      <svg viewBox="0 0 4 6" className="h-1.5 w-1" fill="#b9bcc4"><path d="M4 0v6L0 3z" /></svg>
    </span>
  </section>
);

/* ---------- taskbar ---------- */

const frame = "flex h-[39px] items-center justify-center border border-[#c9a39d] bg-white/15";

const Taskbar = () => (
  <footer className="relative flex h-10 shrink-0 items-stretch bg-linear-to-b from-[#b5827a] from-20% to-[#83504a] to-20% pr-[7px]">
    <button aria-label="File Explorer" className="ml-[17px] flex w-[58px] items-center justify-center">
      <svg viewBox="0 0 32 30" className="h-[30px] w-8">
        <path d="M1 5h10l2 2h17v20H1z" fill="#e9c75f" /><path d="M4 3h7v4H4z" fill="#35b83a" /><path d="M11 4h8v4h-8z" fill="#e04b3a" /><path d="M20 5h9v4h-9z" fill="#3d9be8" />
        <path d="M3 4h26v5H3z" fill="#fdf6d8" opacity=".6" /><path d="M1 9h30v18H1z" fill="#f5df88" /><path d="M5 17h22v11h-5v-6H10v6H5z" fill="#a9d9ee" stroke="#6cb0d4" />
      </svg>
    </button>
    <button className="ml-[3px] flex w-[58px] items-center justify-center">
      <span className="flex size-[31px] items-center justify-center rounded-full bg-radial from-[#4b70c8] to-[#182a6c] font-['Noto_Sans_CJK_TC'] text-xl leading-none font-bold text-[#f52a12]">南</span>
    </button>
    <button aria-label="Grammarly" className={`${frame} ml-[5px] w-[58px]`}>
      <svg viewBox="0 0 32 32" className="size-8"><circle cx="16" cy="16" r="16" fill="#15c39a" /><path d="M23 10a9 9 0 1 0 1.500 8.500H18M24.500 18.500V24" fill="none" stroke="#fff" strokeWidth="2.500" /></svg>
    </button>
    <button aria-label="Chromium" className={`${frame} ml-1 w-[58px]`}>
      <svg viewBox="0 0 30 30" className="size-[30px]">
        <circle cx="15" cy="15" r="14" fill="#8ab0dc" /><path d="M3 8a14 14 0 0 1 24.500 1H15a6 6 0 0 0-6 5z" fill="#3e6ca8" /><path d="m15 29 6-11 1-8h6a14 14 0 0 1-13 19z" fill="#b7d1ee" />
        <circle cx="15" cy="15" r="6.500" fill="#e6eff9" /><circle cx="15" cy="15" r="5" fill="#5286c4" />
      </svg>
    </button>
    <div className="ml-1 flex">
      <button aria-label="Writer" className={`${frame} w-[51px]`}>
        <svg viewBox="0 0 32 32" className="size-8">
          <path d="M7 3h7v28H7z" fill="#17324f" /><path d="M12 8 24 2l7 7v22H12z" fill="#e9f0f6" /><path d="m22 2 9 9v-7l-5-2z" fill="#3f6b94" />
          <path d="M15 17h13M19 22h9M15 27h13" stroke="#3a6a99" strokeWidth="2.200" /><path d="M3 6q6-5 8-1 4-4 10-2M1 13q7-6 10-1 5-6 11-3" fill="none" stroke="#fff" strokeWidth="2.200" />
        </svg>
      </button>
      <i className="h-[39px] w-1 border-y border-r border-[#c9a39d] bg-white/15" />
      <i className="h-[39px] w-1 border-y border-r border-[#c9a39d] bg-white/15" />
    </div>
    <div className="ml-[3px] flex">
      <button aria-label="Chrome" className="flex h-[39px] w-[51px] items-center justify-center border border-white bg-[#c09a94]">
        <svg viewBox="0 0 30 30" className="size-[30px]">
          <circle cx="15" cy="15" r="14" fill="#1fa15d" /><path d="M2.900 8a14 14 0 0 1 24.300 0.500H15a6.500 6.500 0 0 0-6 9z" fill="#de4b3b" /><path d="M27.500 8.500A14 14 0 0 1 14.500 29L21 18a6 6 0 0 0-1-8z" fill="#fccf4a" />
          <circle cx="15" cy="15" r="6.500" fill="#fff" /><circle cx="15" cy="15" r="5" fill="#4a8af4" />
        </svg>
      </button>
      <i className="h-[39px] w-1 border-y border-r border-white bg-white/25" />
      <i className="h-[39px] w-1 border-y border-r border-white bg-white/25" />
    </div>
    <span className="flex-1" />
    <div className="flex items-center gap-2 text-white">
      <svg viewBox="0 0 8 5" className="mr-1.5 h-[5px] w-2" fill="#fff"><path d="m4 0 4 5H0z" /></svg>
      <svg viewBox="0 0 16 16" className="size-4" fill="none" stroke="#fff" strokeWidth="1.500"><path d="M2 1v4M5 1v4M0 5.500h7M3.500 6v9" /><path stroke="#4a2a26" d="M8 2.500h6v12H8z" /><path stroke="#e02020" strokeWidth="2" d="m8 9 7 6M15 9l-7 6" /></svg>
      <svg viewBox="0 0 16 16" className="size-4" fill="#fff"><path d="M1 5h3l5-4v14l-5-4H1z" /><path d="M11 5q2 3 0 6M13 3q3.500 5 0 10" fill="none" stroke="#fff" /></svg>
      <svg viewBox="0 0 16 16" className="size-4"><path d="M2 1v14" stroke="#fff" strokeWidth="1.500" /><path d="M3 2q3-1 5 0t6 0v7q-4 1-6 0t-5 0z" fill="#fff" /><circle cx="11" cy="11" r="4.500" fill="#e02a20" /><path d="m9 9 4 4M13 9l-4 4" stroke="#fff" strokeWidth="1.500" /></svg>
      <svg viewBox="0 0 16 16" className="size-4" fill="none" stroke="#fff" strokeWidth="1.400"><path d="M6 3.500h9v7.500H5V8M7 14h7M10 11v3M1 2h4v4H1zM3 6v6" /></svg>
    </div>
    <div className="ml-[18px] pt-1 text-center font-['Open_Sans'] text-xs leading-[17px] text-white">
      <div>8:20 AM</div>
      <div>7/1/2020</div>
    </div>
    <i className="w-[19px]" />
    <i className="absolute right-0 bottom-0 h-[136px] w-[7px] border-t border-l border-[#cfcfd4] bg-[#ebebee]" />
  </footer>
);

export default function App() {
  return (
    <div className="relative flex h-screen flex-col overflow-hidden bg-white">
      <TabStrip />
      <AddressBar />
      <SiteHeader />
      <main className="flex min-h-0 flex-1">
        <DrawingTools />
        <ChartPanel />
        <div className="w-4 shrink-0 bg-white" />
      </main>
      <Taskbar />
      <WindowControls />
      <ImeBadge />
      <ImeBar />
    </div>
  );
}
